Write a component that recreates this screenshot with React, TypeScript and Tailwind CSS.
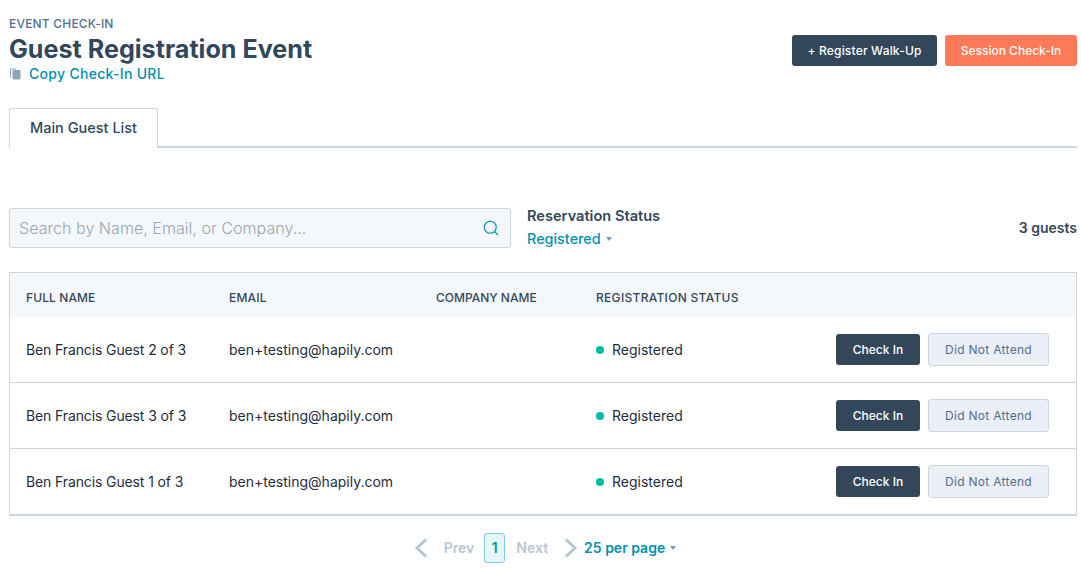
import { Search } from "lucide-react";

const guests = ["Ben Francis Guest 2 of 3", "Ben Francis Guest 3 of 3", "Ben Francis Guest 1 of 3"];

function Caret({ className }: { className: string }) {
  return (
    <svg width="6" height="4" viewBox="0 0 6 4" className={className}>
      <path d="M0 0h6L3 4z" fill="currentColor" />
    </svg>
  );
}

export default function App() {
  return (
    <div className="h-[568px] w-[1081px] overflow-hidden bg-white pl-[9px] pr-[4px] font-['Inter',sans-serif] text-[#33475b]">
      {/* Header */}
      <div className="flex h-[108px] items-start justify-between pt-[16px]">
        <div>
          <div className="text-[12px] font-medium leading-[16px] tracking-[0.2px] text-[#516f90]">EVENT CHECK-IN</div>
          <h1 className="mt-[1px] text-[25.15px] font-bold leading-[32px] text-[#33475b]">Guest Registration Event</h1>
          <div className="-mt-[2px] flex h-[20px] items-center">
            <svg width="12" height="13" viewBox="0 0 12 13" className="mr-[8px] text-[#8fa5bd]">
              <path d="M1 1.5h6v1H2v8H1z" fill="currentColor" />
              <rect x="3.5" y="3" width="8" height="9.5" rx="1.2" fill="currentColor" />
            </svg>
            <a className="text-[14px] font-medium tracking-[0.3px] text-[#0091ae]">Copy Check-In URL</a>
          </div>
        </div>
        <div className="mt-[19px] flex gap-[8px]">
          <button className="h-[31px] w-[145px] rounded-[3px] bg-[#33475b] text-[12px] font-medium tracking-[0.18px] text-white">+ Register Walk-Up</button>
          <button className="h-[31px] w-[132px] rounded-[3px] bg-[#ff7a59] text-[12px] font-medium text-white">Session Check-In</button>
        </div>
      </div>

      {/* Tabs */}
      <div className="flex h-[40px] border-b-2 border-[#cbd6e2]">
        <div className="-mb-[2px] flex h-[40px] w-[149px] items-center justify-center border border-b-0 border-[#cbd6e2] bg-white pb-[2px] text-[14.5px] font-medium">
          Main Guest List
        </div>
      </div>

      {/* Filters */}
      <div className="mt-[60px] flex h-[40px] items-start">
        <div className="flex h-[40px] w-[502px] items-center justify-between rounded-[3px] border border-[#cbd6e2] bg-[#f5f8fa] pl-[9px] pr-[10px]">
          <span className="text-[16.1px] font-light text-[#9aa5b1]">Search by Name, Email, or Company...</span>
          <Search size={18} strokeWidth={1.5} className="text-[#0091ae]" />
        </div>
        <div className="ml-[16px]">
          <div className="text-[14.6px] font-semibold leading-[16px]">Reservation Status</div>
          <div className="mt-[6px] flex items-center gap-[5px] text-[14.4px] font-medium leading-[17px] text-[#0091ae]">
            Registered
            <Caret className="text-[#7c98b6]" />
          </div>
        </div>
        <div className="ml-auto mt-[12px] text-[14px] font-semibold leading-[16px]">3 guests</div>
      </div>

      {/* Table */}
      <div className="mt-[24px] border border-[#cbd6e2]">
        <div className="flex h-[44px] items-center bg-[#f5f8fa] pl-[16px] pt-[6px] text-[12px] font-medium text-[#33475b]">
          <div className="w-[203px] tracking-[0.1px]">FULL NAME</div>
          <div className="w-[207px] tracking-[0.2px]">EMAIL</div>
          <div className="w-[160px]">COMPANY NAME</div>
          <div className="tracking-[0.3px]">REGISTRATION STATUS</div>
        </div>
        {guests.map((name) => (
          <div key={name} className="flex h-[66px] items-center border-b border-[#cbd6e2] pl-[16px] pr-[27px] text-[14px] text-[#1f2d3d]">
            <div className="w-[203px] tracking-[-0.12px]">{name}</div>
            <div className="w-[367px]">ben+testing@hapily.com</div>
            <div className="flex items-center gap-[8px]">
              <span className="h-[8px] w-[8px] rounded-full bg-[#00bda5]" />
              Registered
            </div>
            <div className="ml-auto flex items-center gap-[8px]">
              <button className="h-[31px] w-[84px] rounded-[3px] bg-[#33475b] text-[12px] font-medium text-white">Check In</button>
              <button className="h-[33px] w-[121px] rounded-[3px] border border-[#cbd6e2] bg-[#eaf0f6] text-[12px] font-normal tracking-[0.3px] text-[#516f90]">Did Not Attend</button>
            </div>
          </div>
        ))}
      </div>

      {/* Pagination */}
      <div className="mt-[16px] flex h-[31px] items-center justify-center pl-[4px] text-[14px] font-semibold">
        <svg width="14" height="20" viewBox="0 0 14 20" fill="none" className="text-[#b9c6d8]">
          <path d="M12 1.5 3 10l9 8.5" stroke="currentColor" strokeWidth="3" />
        </svg>
        <span className="ml-[16px] text-[#b9c6d8]">Prev</span>
        <span className="ml-[10px] flex h-[30px] w-[21px] items-center justify-center rounded-[3px] border border-[#7fd1de] bg-[#e5f5f8] text-[#0091ae]">1</span>
        <span className="ml-[11px] text-[#b9c6d8]">Next</span>
        <svg width="14" height="20" viewBox="0 0 14 20" fill="none" className="ml-[16px] text-[#b9c6d8]">
          <path d="M2 1.5 11 10l-9 8.5" stroke="currentColor" strokeWidth="3" />
        </svg>
        <span className="ml-[6px] text-[#0091ae]">25 per page</span>
        <Caret className="ml-[5px] text-[#7c98b6]" />
      </div>
    </div>
  );
}
